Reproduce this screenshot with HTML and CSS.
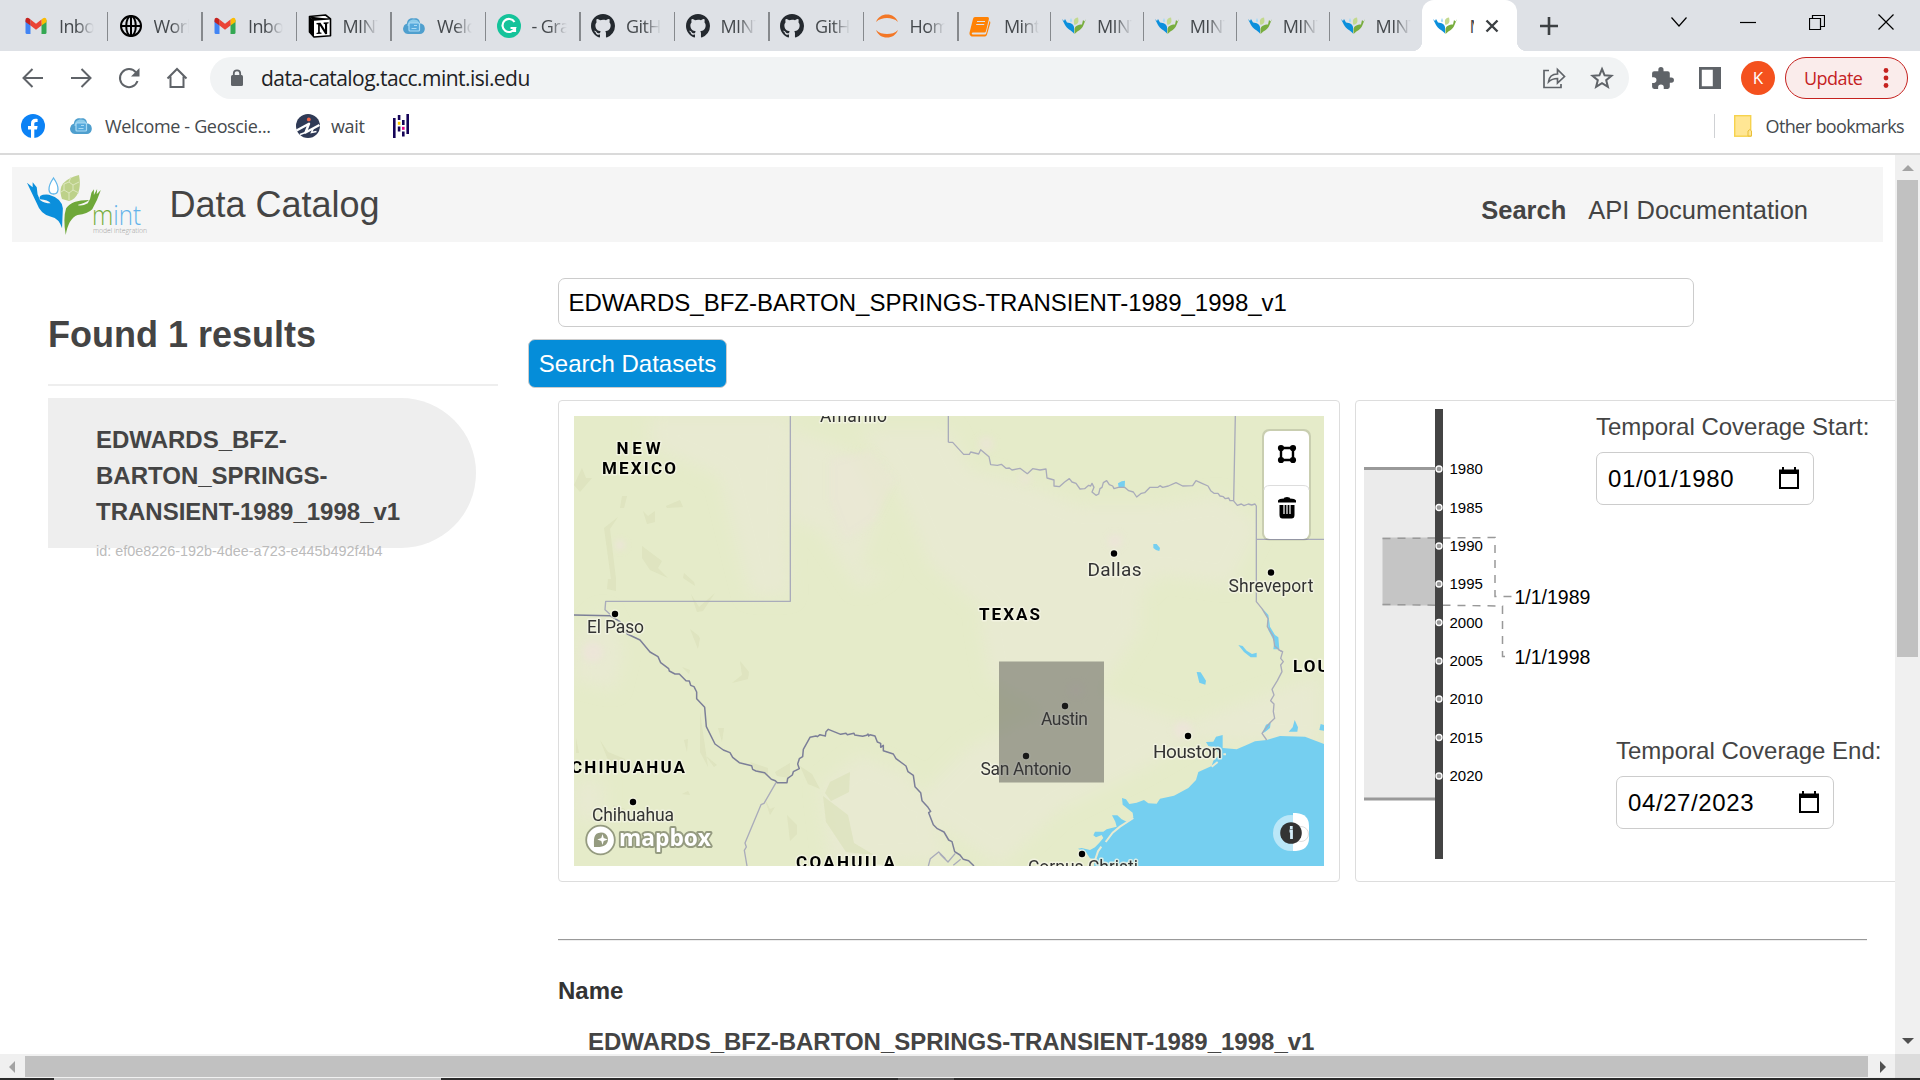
FILE: index.html
```html
<!DOCTYPE html>
<html lang="en">
<head>
<meta charset="utf-8">
<title>MINT Data Catalog</title>
<link rel="stylesheet" href="styles.css">
</head>
<body>
<svg class="defs" width="0" height="0" aria-hidden="true">
  <symbol id="gmail" viewBox="0 0 24 24"><path fill="#4285f4" d="M1.500 20V6l5 3.600V20H3a1.500 1.500 0 0 1-1.500-1z"/><path fill="#34a853" d="M17.500 20V9.600l5-3.600v12.500a1.500 1.500 0 0 1-1.500 1.500z"/><path fill="#fbbc04" d="M17.500 5.500v6.100l5-3.600V6c0-2.200-2-3-3.500-1.800z"/><path fill="#ea4335" d="M6.500 11.600V5.500l5.500 4.200 5.500-4.200v6.100L12 15.700z"/><path fill="#c5221f" d="M1.500 8V6C1.500 3.800 3.500 3 5 4.200l1.500 1.300v6.100z"/></symbol>
  <symbol id="globe" viewBox="0 0 24 24"><g fill="none" stroke="#000" stroke-width="2"><circle cx="12" cy="12" r="10"/><ellipse cx="12" cy="12" rx="4.800" ry="10"/><path d="M2 12h20M12 2v20"/></g></symbol>
  <symbol id="notion" viewBox="0 0 24 24"><path fill="#fff" stroke="#000" stroke-width="1.600" stroke-linejoin="round" d="M1.500 2.500 17.500 1l5 3.800v17L6 23l-4.500-5z"/><path fill="#000" d="M1 2.500 6 6v17l-5-5.500zM8.500 9l4-.3 4.500 7V10.200l-1.400-.4V8.500l5-.3v1l-1.500.5V20l-1.800.2-5.500-8.600v6.600l1.700.5v1l-5 .3v-1l1.600-.6v-8l-1.600-.2z"/><path stroke="#000" stroke-width="1.300" d="M2 2.500 6.500 6 22 4.900"/></symbol>
  <symbol id="cloud" viewBox="0 0 24 24"><path fill="#4f9fce" d="M6 20a5 5 0 0 1-4.500-7C2 10.500 4 10 5 9.500 5 5 9 3.500 12 4.500c3-.8 6 1 6 5 4 0 5.500 4 4.500 7a5 5 0 0 1-4.500 3.500z"/><path fill="#8bcbea" d="M5.500 12c0-4 2.500-6.500 6.500-6.500s5.500 3 5.500 5.500z"/><rect x="7" y="9" width="10.500" height="8" rx="1" fill="#55a9dc" stroke="#a9daf3" stroke-width="1.200"/><path d="M9.500 14.500h5M12 11.500h3" stroke="#a9daf3"/></symbol>
  <symbol id="grammarly" viewBox="0 0 24 24"><circle cx="12" cy="12" r="12" fill="#15c39a"/><path fill="none" stroke="#fff" stroke-width="2.200" d="M17.500 8A6.500 6.500 0 1 0 18 14h-4.500M18 13v5"/></symbol>
  <symbol id="github" viewBox="0 0 16 16"><path fill="#24292f" d="M8 0C3.580 0 0 3.580 0 8c0 3.540 2.290 6.530 5.470 7.590.4.070.55-.17.55-.38 0-.19-.01-.82-.01-1.490-2.010.37-2.530-.49-2.690-.94-.09-.23-.48-.94-.82-1.130-.28-.15-.68-.52-.01-.53.63-.01 1.080.58 1.230.82.72 1.210 1.870.87 2.330.66.07-.52.28-.87.51-1.070-1.780-.2-3.640-.89-3.640-3.950 0-.87.31-1.590.82-2.150-.08-.2-.36-1.020.08-2.120 0 0 .67-.21 2.200.82A7.400 7.400 0 0 1 8 3.860c.68 0 1.360.09 2 .27 1.530-1.040 2.200-.82 2.200-.82.44 1.100.16 1.920.08 2.120.51.56.82 1.270.82 2.150 0 3.070-1.870 3.750-3.650 3.950.29.25.54.73.54 1.480 0 1.070-.01 1.930-.01 2.200 0 .21.15.46.55.38A8 8 0 0 0 16 8c0-4.420-3.580-8-8-8z"/></symbol>
  <symbol id="jupyter" viewBox="0 0 24 24"><path fill="#f37726" d="M1 8C3 3 7 .5 12 .5S21 3 23 8c-3-3-7-4-11-4S4 5 1 8zM1 16c2 5 6 7.500 11 7.500s9-2.500 11-7.500c-3 3-7 4-11 4s-8-1-11-4z"/></symbol>
  <symbol id="book" viewBox="0 0 24 24"><path fill="#ff8205" d="M6 3h12.500c1 0 1.700.8 1.400 2L17 17c-.3 1-1 1.500-2 1.500H4c-1.500 0-1.800 2 0 2h11.500c1 0 1.500-.6 1.800-1.600L20.500 7c1 .7.900 1.700.7 2.500L18 20.500C17.500 22 16.500 22.500 15.500 22.500H3.500C1 22.500 0 20 .7 18L4 5c.3-1.200 1-2 2-2z"/><path d="M8 7.500h8M7.200 10.500h8" stroke="#dee1e6" stroke-width="1.200"/></symbol>
  <symbol id="mint" viewBox="0 0 24 24"><path fill="#0b8fdc" d="M0 5l2 2 1-2 2 3.500c4 .5 6 1 7 4.500v6.500C9 16 5 15 3 11z"/><path fill="#78ad3e" d="M24 5l-1.500 2.500L21 6l-1 4.500c-4 0-7 1.500-7.500 4.500L12.500 20c4-4 7-4 9-9z"/><path fill="#c3d98f" d="M16 3.500c-4 .5-5 3-3.500 7.500 4-1 4.500-3 3.500-7.500z"/><path fill="#a7dcf8" d="M9 4c-1.500 2.500-1.500 4 0 4s1.500-1.500 0-4z"/></symbol>
</svg>

<header class="tabs">
  <div class="tab"><svg><use href="#gmail"/></svg><span>Inbox</span></div>
  <div class="tab"><svg><use href="#globe"/></svg><span>World</span></div>
  <div class="tab"><svg><use href="#gmail"/></svg><span>Inbox</span></div>
  <div class="tab"><svg><use href="#notion"/></svg><span>MINT</span></div>
  <div class="tab"><svg><use href="#cloud"/></svg><span>Welco</span></div>
  <div class="tab"><svg><use href="#grammarly"/></svg><span>- Gram</span></div>
  <div class="tab"><svg><use href="#github"/></svg><span>GitHub</span></div>
  <div class="tab"><svg><use href="#github"/></svg><span>MINT</span></div>
  <div class="tab"><svg><use href="#github"/></svg><span>GitHub</span></div>
  <div class="tab"><svg><use href="#jupyter"/></svg><span>Home</span></div>
  <div class="tab narrow"><svg><use href="#book"/></svg><span>Mint</span></div>
  <div class="tab narrow"><svg><use href="#mint"/></svg><span>MINT</span></div>
  <div class="tab narrow"><svg><use href="#mint"/></svg><span>MINT</span></div>
  <div class="tab narrow"><svg><use href="#mint"/></svg><span>MINT</span></div>
  <div class="tab narrow last"><svg><use href="#mint"/></svg><span>MINT</span></div>
  <div class="tab active"><svg><use href="#mint"/></svg><span>M</span><svg class="close" viewBox="0 0 14 14"><path d="M1.500 1.500l11 11M12.500 1.500l-11 11" stroke="#3c4043" stroke-width="2.400"/></svg></div>
  <svg class="plus" viewBox="0 0 18 18"><path d="M9 0v18M0 9h18" stroke="#3c4043" stroke-width="2.600"/></svg>
  <div class="window-buttons">
    <svg viewBox="0 0 16 22"><path d="M.5 6.500 8 15l7.500-8.500"/></svg>
    <svg viewBox="0 0 16 22"><path d="M0 11.500h16"/></svg>
    <svg viewBox="0 0 16 22"><path d="M.5 7.500h11v11H.5zM3.500 7V4.500h12v11H12"/></svg>
    <svg viewBox="0 0 16 22"><path d="M.5 3.500l15 15M15.500 3.500l-15 15"/></svg>
  </div>
</header>

<nav class="toolbar">
  <div class="nav-icons">
    <svg viewBox="0 0 24 24"><path d="M22 12H3M11.500 3 2.500 12l9 9"/></svg>
    <svg viewBox="0 0 24 24"><path d="M2 12h19M12.500 3l9 9-9 9"/></svg>
    <svg viewBox="0 0 24 24"><path d="M20.500 15A9 9 0 1 1 19 6.500"/><path d="M22.500 2v8.500H14z" fill="#5f6368" stroke="none"/></svg>
    <svg viewBox="0 0 24 24"><path d="M2.500 12.500 12 3l9.500 9.500M5.500 10.500V21h13V10.500"/></svg>
  </div>
  <div class="omnibox">
    <svg class="lock" viewBox="0 0 12 18"><rect y="6" width="12" height="11" rx="1.500" fill="#5f6368"/><path d="M2.800 7V4.500a3.200 3.200 0 0 1 6.400 0V7" fill="none" stroke="#5f6368" stroke-width="1.800"/></svg>
    <span class="url">data-catalog.tacc.mint.isi.edu</span>
    <svg class="share" viewBox="0 0 24 24"><path d="M7 4.500H2v17h17V18"/><path d="M6.500 16c.5-5 4-8 9-8V3.500l7 7-7 6.500v-4.500c-4 0-6.500 1-9 3.500z"/></svg>
    <svg class="star" viewBox="0 0 24 24"><path d="M12 3l2.600 6.300 6.900.5-5.300 4.400 1.700 6.700-5.900-3.700-5.900 3.700 1.700-6.700-5.300-4.400 6.900-.5z"/></svg>
  </div>
  <svg class="puzzle" viewBox="0 0 24 24"><path fill="#5f6368" d="M20.500 11H19V7a2 2 0 0 0-2-2h-4V3.500a2.500 2.500 0 0 0-5 0V5H4a2 2 0 0 0-2 2v3.800h1.500a2.700 2.700 0 0 1 0 5.400H2V20a2 2 0 0 0 2 2h3.800v-1.500a2.700 2.700 0 0 1 5.400 0V22H17a2 2 0 0 0 2-2v-4h1.500a2.500 2.500 0 0 0 0-5z"/></svg>
  <svg class="panel" viewBox="0 0 22 22"><path fill="#5f6368" fill-rule="evenodd" d="M0 0h22v22H0zM2.800 2.800v16.400h11V2.800z"/></svg>
  <div class="avatar">K</div>
  <div class="update"><span>Update</span><svg viewBox="0 0 6 22"><g fill="#c5221f"><circle cx="3" cy="3.500" r="2.400"/><circle cx="3" cy="11" r="2.400"/><circle cx="3" cy="18.500" r="2.400"/></g></svg></div>
</nav>

<div class="bookmarks">
  <svg class="ic" viewBox="0 0 24 24"><circle cx="12" cy="12" r="12" fill="#0c82f5"/><path fill="#fff" d="M10 24v-8.500H7V12h3V9.500C10 6.300 11.800 4.800 14.600 4.800c1 0 2 .2 2 .2v3h-1.400c-1.500 0-1.900.9-1.900 1.800V12h3.300l-.6 3.500h-2.700V24z"/></svg>
  <svg class="ic cloud"><use href="#cloud"/></svg>
  <span class="geo">Welcome - Geoscie...</span>
  <svg class="ic wait-ic" viewBox="0 0 24 24"><circle cx="12" cy="12" r="12" fill="#2f3a56"/><circle cx="12.800" cy="5.400" r="1.900" fill="#f2674a"/><path fill="none" stroke="#fff" stroke-width="2.400" stroke-linejoin="round" d="M.500 16.500 13 9.800 9.500 18.500 23.500 11"/><path d="M4 20.500 9.500 18.500M17 15l-1.500 3.500 5-1" fill="none" stroke="#fff" stroke-width="1.500"/></svg>
  <span class="wait">wait</span>
  <svg class="pandas" viewBox="0 0 16 24"><path fill="#150458" d="M0 4h2.600v20H0zM13.400 0H16v20h-2.600zM4.800 1h2.600v5H4.800zM4.800 12.500h2.600v5H4.800zM9 6h2.600v5H9zM9 17.500h2.600v5H9z"/><path fill="#ffca00" d="M4.800 7.800h2.600v3H4.800z"/><path fill="#e70488" d="M9 12.800h2.600v3H9z"/></svg>
  <div class="other">
    <svg viewBox="0 0 18 22"><rect x=".7" y=".7" width="16" height="20.500" fill="#ffe694" stroke="#f6d24d" stroke-width="1.400"/><path d="M14 21v-5q2-3 3.500 0v5z" fill="#ffe694" stroke="#e8bf3a"/></svg>
    <span>Other bookmarks</span>
  </div>
</div>

<div class="viewport">
  <div class="page">
    <div class="site-header">
      <svg class="logo" viewBox="26 174 124 62">
        <g transform="translate(0 150) scale(.40816 .33333)">
          <path fill="#0b8fdc" d="M66 98 80 112V97l10 15 2 21 6 17q10 10 26 10-6-10-26-12-6-16 22-14 32 11 34 41l-2 60q-7-30-27-35-25-5-35-40z"/>
          <path fill="#6fa83a" d="M247 120q-8 30-21 58-11 14-36 17-22 10-29 60-7-50 1-80 13-25 56-25-6 8-28 15 10 5 25-5 7-12 9-32l6-10v17l8-18-1 16z"/>
        </g>
        <path d="M53.500 178c-7 10-5 16 0 16s7-6 0-16z" fill="#fff" stroke="#5fb6ea" stroke-width="1.300"/>
        <path d="M79 175c-14 4-22 10-17 24l7 2c8-2 13-11 10-26z" fill="#bdd18a"/>
        <path d="M64 184l5-2 4 3v5l-4 3-5-3zM73 185l6-3M69 193v7M73 190l6 3M64 190l-3 2M69 182l2-5" fill="none" stroke="#dce7bd"/>
        <text x="92" y="225" font-size="27" textLength="49" lengthAdjust="spacingAndGlyphs" class="mint-word"><tspan fill="#78ad3e">m</tspan><tspan fill="#63b3ea">int</tspan></text>
        <text x="93" y="232.500" font-size="7.500" fill="#999" textLength="54" lengthAdjust="spacingAndGlyphs" class="mint-word">model integration</text>
      </svg>
      <h1>Data Catalog</h1>
      <div class="links"><b>Search</b><span>API Documentation</span></div>
    </div>
    <div class="columns">
      <aside>
        <h2>Found 1 results</h2>
        <div class="card-result">
          <div class="result-name">EDWARDS_BFZ-<br>BARTON_SPRINGS-<br>TRANSIENT-1989_1998_v1</div>
          <div class="result-id">id: ef0e8226-192b-4dee-a723-e445b492f4b4</div>
        </div>
      </aside>
      <main>
        <div class="search-input">EDWARDS_BFZ-BARTON_SPRINGS-TRANSIENT-1989_1998_v1</div>
        <div class="search-button">Search Datasets</div>
        <div class="panels">
          <div class="map-card">
            <svg class="map" viewBox="574 416 750 450">
              <defs><filter id="soft" x="-20%" y="-20%" width="140%" height="140%"><feGaussianBlur stdDeviation="8"/></filter><filter id="spot" x="-20%" y="-20%" width="140%" height="140%"><feGaussianBlur stdDeviation="3"/></filter></defs>
              <rect x="574" y="416" width="750" height="450" fill="#e5ebc9"/>
              <g fill="#e8ead1" filter="url(#soft)">
                <path d="M650 416h140l-5 60 5 120-40 0-30-120-70-30z"/>
                <path d="M790 430l60 20 30 60-20 60 30 0-30 20-40-60-30-10z"/>
                <path d="M860 430l90 0 20 40 60 15 50 20 80 0 60-10 40 30-30 60-70-10-60 60-110-20-60-50-30-70z"/>
                <path d="M1080 520l60 30 0 80-40 60-40 30-70-40-10-60z"/>
                <path d="M1090 690l60 20 60 20-70 40-80 40-60 56-90-60 60-60z"/>
                <path d="M860 755l50 20 40 85-120 6-10-80z"/>
                <path d="M574 640l30-30 20 40-10 40-40-10zM574 780h30v40h-30z"/>
                <path d="M1180 725l140-50v70l-120-5z"/>
              </g>
              <g fill="#ece5d8" filter="url(#spot)"><path d="M830 460l40-10 25 30-20 40-30 20-15-40z" opacity=".5"/><circle cx="1115" cy="541" r="7"/><circle cx="593" cy="652" r="10"/><circle cx="1183" cy="730" r="9"/><circle cx="986" cy="444" r="8" opacity=".6"/><circle cx="620" cy="545" r="5"/><circle cx="1076" cy="690" r="7" opacity=".6"/><circle cx="1025" cy="478" r="6" opacity=".6"/></g>
              <g fill="#dce2bc" opacity=".75">
                <path d="M574 485l8-17 4 10 6 0-12 14zM604 528l14-11-8 12 6 50 0 12-9-2 1-10 3 0zM622 496l5 0-3 12-4 0zM643 511l5 5 7-5v11l-8 2zM642 546l20 15-4 7 10 10-18-8-8-12zM666 506l14-6 3 7-16 1zM684 573l10 9 1 4-12-8zM691 594l8 13 16-14-12 18-6 1zM691 630l9 8-2 10z"/>
                <path d="M690 629l9 7-1 13zM740 661l9 11-1 7-16 4 10-8zM682 667l8 3-1 4zM700 712v40l8 15zM718 728l6 0-2 14zM600 740l8 12 17 7-2 11-15-10zM684 740l4-1-1 13zM705 755l12 10-3 2zM750 762l18 6 0 8-10-3zM775 772l15-9v15l-13-2zM800 766l12 8 8 15-12-5zM830 782l20-10-1 20-18 9-6-8zM787 815l10 10 0 9-7 7zM823 796l25 19 6 28 20 12-28-3-20-30zM576 738l3 15-3 0zM682 794l6-3 2 4z"/>
                <path d="M764 797l6 12 5-2-5 8zM613 805l12 4-3 8-8-4z"/>
              </g>
              <g transform="translate(940 640) scale(.333333)">
                <path fill="#75cff0" d="M1152 312 1095 290 1020 288 980 300 945 304 918 316 890 328 848 324 848 285 828 290 820 305 798 306 805 318 825 322 838 345 820 362 815 378 775 396 768 420 745 444 702 467 660 476 650 491 625 490 612 480 590 488 568 492 558 478 546 474 548 494 578 518 580 532 560 545 545 538 532 526 516 526 526 545 530 560 500 568 490 575 465 575 460 586 468 592 485 585 490 594 478 608 465 622 450 630 425 624 414 626 440 640 450 655 464 658 462 678H1152zM770 96 782 97 798 122 796 134 778 128zM992 248 978 254 966 280 975 276 990 264zM1064 240 1074 262 1072 275 1046 275 1058 262zM1142 252 1152 255V272L1138 270z"/>
                <path d="M580 534 540 560 518 578 497 606M484 620 474 634 466 658M815 380 833 366M850 343h8" stroke="#e8ead1" stroke-width="6" fill="none"/>
              </g>
              <path fill="#75cff0" transform="translate(940 400) scale(.333333)" d="M534 250 545 244 555 242 554 265 536 262zM640 432H650L660 444 658 453 648 450 640 444zM895 735 908 738 920 752 936 762 950 758V772H932L912 756zM966 624 985 645 990 680 1005 705 1015 712 1018 748H1000L1003 725 985 690 984 655z"/>
              <g transform="translate(540 260) scale(.333333)" class="border"><path d="M751 468V1024H197l-2 25 15 14M1225 468v79"/></g>
              <g transform="translate(940 400) scale(.333333)" class="border">
                <path d="M25 127H38L71 163H88L92 156 116 162 122 149 147 170 152 194 172 196 184 193 198 205 208 204 216 210 240 205 262 221 278 206 300 210 318 207 321 234 342 240V258L358 260 374 246 388 236 396 246 408 250 420 267 434 266 446 256 452 258 456 250 462 262 456 276 468 286 476 282 480 266 486 262 490 248 500 242 508 254 518 258 522 266 535 262H554L566 272 580 276 590 291 604 280 614 278 630 262H654L660 257 668 262 685 258 708 248 728 258 758 257 768 242 786 250 804 258 812 272 822 280H834L840 288 850 290 856 296 866 294 870 302H880L892 316 904 312 912 317 925 312 935 315 945 312 949 318V605L966 626 984 656 982 680 1000 710 1004 738 1018 750 1026 755"/>
                <path d="M886 47l-5 255M949 418h203"/>
              </g>
              <g transform="translate(940 640) scale(.333333)" class="border"><path d="M1016 30 1028 35 1022 55 1030 65 1022 75 1026 95 1012 122 996 148 1002 165 992 182 1002 192 1000 215 1004 235 990 248 966 280 980 300M0 642l24 24 22-26M40 676l22-18"/></g>
              <g transform="translate(560 620) scale(.333333)" class="border">
                <path d="M648 488l-36 62-9 4-48 115 4 12-6 10 8 47M1105 738l6-22 25-20 20 20"/>
                <path class="national" d="M42-15 150-13 180 5 202 42 240 60 270 96 294 110 302 128 326 146 328 153 345 162H358L378 182 388 183 392 196 402 200 410 216V236L434 262 439 320 465 372 490 390 510 398 518 412 538 428 575 437 578 448 588 453 614 458 634 478 646 482 652 488H681L683 475 697 465 700 455 718 446 713 432 718 416 728 410 730 388 750 352 768 348 772 350 780 344 796 348 798 335 805 328 842 343 858 340 862 344 882 340 884 345 908 349 920 346 924 342 926 348 930 344 945 348 952 366 962 370V382L970 376V392L1000 402 1008 416 1038 438 1044 455 1060 466 1065 500 1082 518 1086 542 1104 562 1112 574 1106 578 1120 614 1132 626 1152 636 1166 660 1176 665 1184 695 1200 705 1210 718 1226 722 1242 738"/>
              </g>
              <g class="city">
                <circle cx="615" cy="614" r="3.200"/><circle cx="633" cy="802" r="3.200"/><circle cx="1114" cy="553.500" r="3.200"/><circle cx="1271" cy="572.500" r="3.200"/><circle cx="1065" cy="706" r="3.200"/><circle cx="1026" cy="756" r="3.200"/><circle cx="1188" cy="736" r="3.200"/><circle cx="1082" cy="854" r="3.200"/>
                <text x="587" y="633" textLength="57">El Paso</text>
                <text x="592" y="821" textLength="82">Chihuahua</text>
                <text x="820" y="421.500" textLength="67">Amarillo</text>
                <text x="1087.500" y="575.500" textLength="54" font-size="19">Dallas</text>
                <text x="1228.500" y="591.500" textLength="85">Shreveport</text>
                <text x="1041" y="724.500" textLength="47">Austin</text>
                <text x="980.500" y="775" textLength="91">San Antonio</text>
                <text x="1153" y="758" textLength="69" font-size="19">Houston</text>
                <text x="1028" y="873" textLength="110">Corpus Christi</text>
              </g>
              <g class="state">
                <text x="616.500" y="453.500" textLength="44">NEW</text><text x="602" y="474" textLength="74">MEXICO</text>
                <text x="979" y="619.500" textLength="61">TEXAS</text>
                <text x="571" y="772.500" textLength="114">CHIHUAHUA</text>
                <text x="796" y="868" textLength="99">COAHUILA</text>
                <text x="1293" y="672" textLength="104">LOUISIANA</text>
              </g>
              <rect x="999" y="661.500" width="105" height="121" fill="#3b3b3b" fill-opacity=".42"/>
              <g>
                <circle cx="600.500" cy="840" r="14.300" fill="#fff" stroke="#959b80" stroke-width="1.800"/>
                <path fill="#959b80" d="M594 847c0-8-1-14 7-14.500 7 0 9 8 5 12-3 3-8 2.500-12 2.500z"/><path fill="#fff" d="M602.500 834l1.200 4 4 1.500-4 1.500-1.200 4-1.200-4-4-1.500 4-1.500z"/>
                <text x="619" y="846" textLength="92" lengthAdjust="spacingAndGlyphs" class="mapbox">mapbox</text>
              </g>
              <rect x="1262" y="429" width="49" height="111.500" rx="7" fill="#000" fill-opacity=".12"/>
              <rect x="1264" y="431" width="45" height="108" rx="6" fill="#fff"/>
              <path d="M1264 490q0-4.500 6-4.500h33q6 0 6 4.500" fill="none" stroke="#ddd"/>
              <path d="M1281 448h12v12h-12z" fill="none" stroke="#000" stroke-width="2.400"/><g><circle cx="1281" cy="448" r="3.100"/><circle cx="1293" cy="448" r="3.100"/><circle cx="1281" cy="460" r="3.100"/><circle cx="1293" cy="460" r="3.100"/></g>
              <path d="M1278 500.500q1-2 6-2 0-1.500 3-1.500t3 1.500q5 0 6 2v2h-18zM1279.500 505h15v10q0 3.500-3 3.500h-9q-3 0-3-3.500z"/><path d="M1284 505v9M1287 505v9M1290 505v9" stroke="#fff" stroke-width="1.200"/>
              <circle cx="1291" cy="833" r="18" fill="#fff" fill-opacity=".5"/><path d="M1293 813h3q13 1 13 13v12q0 12-13 13h-3z" fill="#fff"/><circle cx="1301" cy="834" r="7.500" fill="none" stroke="#ddd"/><circle cx="1291" cy="833" r="10.800" fill="#333"/><path d="M1289.500 831h2v8M1291.300 826v3" fill="none" stroke="#d5eef9" stroke-width="2.800"/>
            </svg>
          </div>
          <div class="time-card">
            <svg class="timeline" viewBox="1356 401 235 479">
              <rect x="1364" y="469" width="72" height="330" fill="#ebebeb"/>
              <path d="M1364 468.500h72M1364 799h72" stroke="#999" stroke-width="3"/>
              <rect x="1382.500" y="537.500" width="53" height="68" fill="#c5c5c5"/>
              <path d="M1382.500 538.500l112.500-1v59h17M1382.500 604.500l120 1.500v50.500h9" fill="none" stroke="#999" stroke-width="1.500" stroke-dasharray="8 7"/>
              <path d="M1435 409h8v450h-8z" fill="#444"/>
              <g fill="#999" stroke="#fff" stroke-width="1.300"><circle cx="1439" cy="469" r="3"/><circle cx="1439" cy="507.500" r="3"/><circle cx="1439" cy="546" r="3"/><circle cx="1439" cy="584" r="3"/><circle cx="1439" cy="622.500" r="3"/><circle cx="1439" cy="661" r="3"/><circle cx="1439" cy="699" r="3"/><circle cx="1439" cy="737.500" r="3"/><circle cx="1439" cy="776" r="3"/></g>
              <g font-size="15"><text x="1449.500" y="474">1980</text><text x="1449.500" y="513">1985</text><text x="1449.500" y="551">1990</text><text x="1449.500" y="589">1995</text><text x="1449.500" y="628">2000</text><text x="1449.500" y="666">2005</text><text x="1449.500" y="704">2010</text><text x="1449.500" y="743">2015</text><text x="1449.500" y="781">2020</text></g>
              <g font-size="19.500"><text x="1514.500" y="604">1/1/1989</text><text x="1514.500" y="664">1/1/1998</text></g>
            </svg>
            <div class="dates">
              <div class="field"><label>Temporal Coverage Start:</label><div class="date"><span>01/01/1980</span><svg viewBox="0 0 20 22"><path d="M1 4h18v17H1z" fill="none" stroke="#000" stroke-width="2"/><path d="M0 2.500h20V7H0zM3 0h2v3H3zM15 0h2v3h-2z"/></svg></div></div>
              <div class="field end"><label>Temporal Coverage End:</label><div class="date"><span>04/27/2023</span><svg viewBox="0 0 20 22"><path d="M1 4h18v17H1z" fill="none" stroke="#000" stroke-width="2"/><path d="M0 2.500h20V7H0zM3 0h2v3H3zM15 0h2v3h-2z"/></svg></div></div>
            </div>
          </div>
        </div>
        <div class="rule"></div>
        <div class="name">Name</div>
        <div class="value">EDWARDS_BFZ-BARTON_SPRINGS-TRANSIENT-1989_1998_v1</div>
      </main>
    </div>
  </div>
  <div class="vbar"><svg viewBox="0 0 12 6"><path d="M0 6 6 0l6 6z" fill="#a3a3a3"/></svg><div class="thumb"></div><svg viewBox="0 0 12 6"><path d="M0 0h12L6 6z" fill="#505050"/></svg></div>
  <div class="hbar"><svg viewBox="0 0 6 12"><path d="M6 0v12L0 6z" fill="#a3a3a3"/></svg><div class="thumb"></div><svg viewBox="0 0 6 12"><path d="M0 0v12l6-6z" fill="#505050"/></svg></div>
  <div class="corner"></div>
</div>
<div class="taskbar"><i class="search-edge"></i><i class="app-edge"></i></div>
</body>
</html>
```
FILE: styles.css
```css
* { box-sizing: border-box; }
html, body { margin: 0; height: 1080px; overflow: hidden; }
body { display: flex; flex-direction: column; width: 1920px; background: #fff; font-family: "Liberation Sans", Arial, sans-serif; color: #444; }
svg { display: block; flex: none; }
.defs { position: absolute; }

.tabs, .toolbar, .bookmarks { font-family: "Open Sans", "Noto Sans", sans-serif; flex: none; display: flex; align-items: center; }
.tabs { height: 51px; background: #dee1e6; padding-left: 13.500px; }
.tab { position: relative; display: flex; align-items: center; width: 94.500px; height: 51px; padding-left: 10.500px; flex: none; font-size: 18px; letter-spacing: -.6px; color: #45494d; }
.tab svg { width: 24px; height: 24px; }
.tab span { margin-left: 11px; width: 35px; overflow: hidden; white-space: nowrap; mask-image: linear-gradient(90deg, #000 50%, transparent); }
.tab::after { content: ""; position: absolute; right: 0; top: 12px; width: 1.500px; height: 29px; background: #86898d; }
.tab.narrow { width: 92.900px; }
.tab.last::after, .tab.active::after { display: none; }
.tab.active { width: 95px; margin-left: -1px; padding-left: 11.500px; background: #fff; border-radius: 12px 12px 0 0; }
.tab.active::before { content: ""; position: absolute; left: -10px; right: -10px; bottom: 0; height: 10px; background: radial-gradient(circle at 0 0, transparent 10px, #fff 10.500px) 0 0 / 10px 10px no-repeat, radial-gradient(circle at 10px 0, transparent 10px, #fff 10.500px) 100% 0 / 10px 10px no-repeat; }
.tab.active span { width: 5px; margin-left: 12px; mask-image: none; }
.tab.active .close { width: 14px; height: 14px; margin-left: 11px; }
.plus { width: 18px; height: 18px; margin-left: 23px; }
.window-buttons { margin-left: auto; display: flex; gap: 53px; padding: 0 26.500px 8px 0; }
.window-buttons svg { width: 16px; height: 22px; fill: none; stroke: #000; stroke-width: 1.200; }

.toolbar { height: 54px; padding: 0 12px 0 21px; }
.nav-icons { display: flex; gap: 24px; width: 189px; }
.nav-icons svg, .omnibox .share, .omnibox .star { width: 24px; height: 24px; fill: none; stroke: #5f6368; stroke-width: 2; }
.omnibox { display: flex; align-items: center; width: 1419px; height: 42px; border-radius: 21px; background: #f1f3f4; padding: 0 15px 0 21px; }
.lock { width: 12px; height: 18px; }
.url { margin-left: 18px; font-size: 21px; letter-spacing: -.55px; color: #202124; }
.omnibox .share { margin-left: auto; margin-right: 24px; stroke-width: 1.700; }
.puzzle { width: 25px; height: 25px; margin-left: 21px; }
.panel { width: 22px; height: 22px; margin-left: 24px; }
.avatar { width: 34px; height: 34px; margin-left: 20px; border-radius: 50%; background: #f4511e; color: #fff; font-size: 17px; line-height: 34px; text-align: center; }
.update { display: flex; align-items: center; justify-content: space-between; width: 123px; height: 42px; margin-left: auto; padding: 0 18px 0 18px; border: 1.500px solid #c5221f; border-radius: 21px; background: #faeceb; color: #c5221f; font-size: 18px; letter-spacing: -.55px; }
.update svg { width: 6px; height: 22px; }

.bookmarks { height: 50px; padding: 0 16px 7px 21px; border-bottom: 2px solid #dadada; font-size: 18px; letter-spacing: -.35px; color: #45494d; }
.bookmarks .ic { width: 24px; height: 24px; }
.bookmarks .cloud { margin-left: 24px; }
.geo { margin-left: 12px; width: 167px; white-space: nowrap; }
.wait-ic { margin-left: 24px; }
.wait { margin-left: 11px; width: 33px; }
.pandas { width: 16px; height: 24px; margin-left: 29px; }
.other { margin-left: auto; display: flex; align-items: center; gap: 14px; height: 24px; padding-left: 19px; border-left: 1px solid #cfd1d4; letter-spacing: -.62px; }
.other svg { width: 18px; height: 22px; }

.viewport { flex: none; height: 923px; display: grid; grid-template: 899px 24px / 1895px 25px; }
.page { overflow: hidden; padding: 12px; }
.site-header { display: flex; align-items: center; height: 75px; width: 1871px; background: #f5f5f5; padding: 0 75px 0 14px; }
.logo { width: 124px; height: 62px; }
.mint-word { font-family: "Open Sans", sans-serif; font-weight: 300; }
h1 { margin: 0 0 0 19.500px; font-size: 36px; font-weight: 400; }
.links { margin-left: auto; padding-top: 12px; font-size: 25.500px; display: flex; gap: 22px; }
.columns { display: flex; }
aside { width: 450px; margin-left: 36px; padding-top: 66px; flex: none; }
h2 { margin: 0; height: 78px; line-height: 54px; font-size: 36px; border-bottom: 2px solid #eee; }
.card-result { width: 428px; height: 150px; margin-top: 12px; padding: 24px 0 0 48px; background: #eee; border-radius: 0 75px 75px 0; }
.result-name { font-size: 24px; font-weight: 700; line-height: 36px; }
.result-id { margin-top: 10px; font-size: 14.400px; line-height: 22px; color: #bbb; }
main { flex: none; margin-left: 60px; padding-top: 36px; width: 1400px; }
.search-input { width: 1136px; height: 49px; padding-left: 9.500px; border: 1px solid #ccc; border-radius: 7px; color: #000; font-size: 24px; line-height: 47px; }
.search-button { width: 199px; height: 49px; margin: 12px 0 12px -30px; border: 1px solid #ccc; border-radius: 7px; background: #058dd9; color: #fff; text-align: center; font-size: 24px; line-height: 47px; }
.panels { display: flex; gap: 15px; }
.map-card, .time-card { height: 482px; border: 1px solid #ddd; border-radius: 4px; }
.map-card { width: 782px; padding: 15px; }
.map { width: 750px; height: 450px; }
.border { fill: none; stroke: #a9abba; stroke-width: 4; stroke-linejoin: round; }
.national { stroke: #7c7f98; stroke-width: 4.500; }
.city, .state { font-family: Roboto, "Open Sans", sans-serif; paint-order: stroke; stroke: #f2f4e4; stroke-opacity: .8; stroke-width: 3px; stroke-linejoin: round; }
.city { font-size: 17.500px; fill: #333; }
.city circle { fill: #000; }
.state { font-size: 17px; font-weight: 700; fill: #000; }
.mapbox { font: 700 24px "Open Sans", sans-serif; fill: #fff; stroke: #959b80; stroke-width: 4px; paint-order: stroke; stroke-linejoin: round; }
.time-card { width: 603px; display: flex; }
.timeline { width: 235px; height: 479px; }
.dates { padding: 8px 0 0 5px; }
.field label { display: block; line-height: 36px; font-size: 24px; }
.date { display: flex; align-items: center; justify-content: space-between; width: 218px; height: 53px; margin-top: 7px; padding: 0 14px 0 11px; border: 1px solid #ccc; border-radius: 7px; color: #000; font-size: 24px; letter-spacing: .6px; padding-bottom: 2px; }
.date span { padding-top: 2px; }
.date svg { width: 20px; height: 22px; }
.field.end { margin: 228px 0 0 20px; }
.rule { width: 1309px; height: 2px; margin-top: 57px; border-top: 1px solid #999; border-bottom: 1px solid #eee; }
.name { margin-top: 32px; color: #333; font-size: 24px; line-height: 36px; font-weight: 700; }
.value { margin: 15px 0 0 30px; font-size: 24px; line-height: 36px; font-weight: 700; white-space: nowrap; }

.vbar { background: #f0f0f0; display: flex; flex-direction: column; align-items: center; padding: 10px 0; }
.vbar svg { width: 12px; height: 6px; }
.vbar .thumb { width: 21px; height: 477px; margin: 9px 0 auto; background: #c1c1c1; }
.hbar { background: #f0f0f0; display: flex; align-items: center; padding: 1px 9px 0; }
.hbar svg { width: 6px; height: 12px; }
.hbar .thumb { width: 1843px; height: 21px; margin: 0 auto 0 10px; background: #c1c1c1; }
.corner { background: #dcdcdc; }
.taskbar { height: 2px; background: #2b2b2b; display: flex; }
.taskbar .search-edge { width: 387px; margin-left: 54px; background: #c8c8c8; }
.taskbar .app-edge { width: 56px; margin-left: 457px; background: #555; }
```
